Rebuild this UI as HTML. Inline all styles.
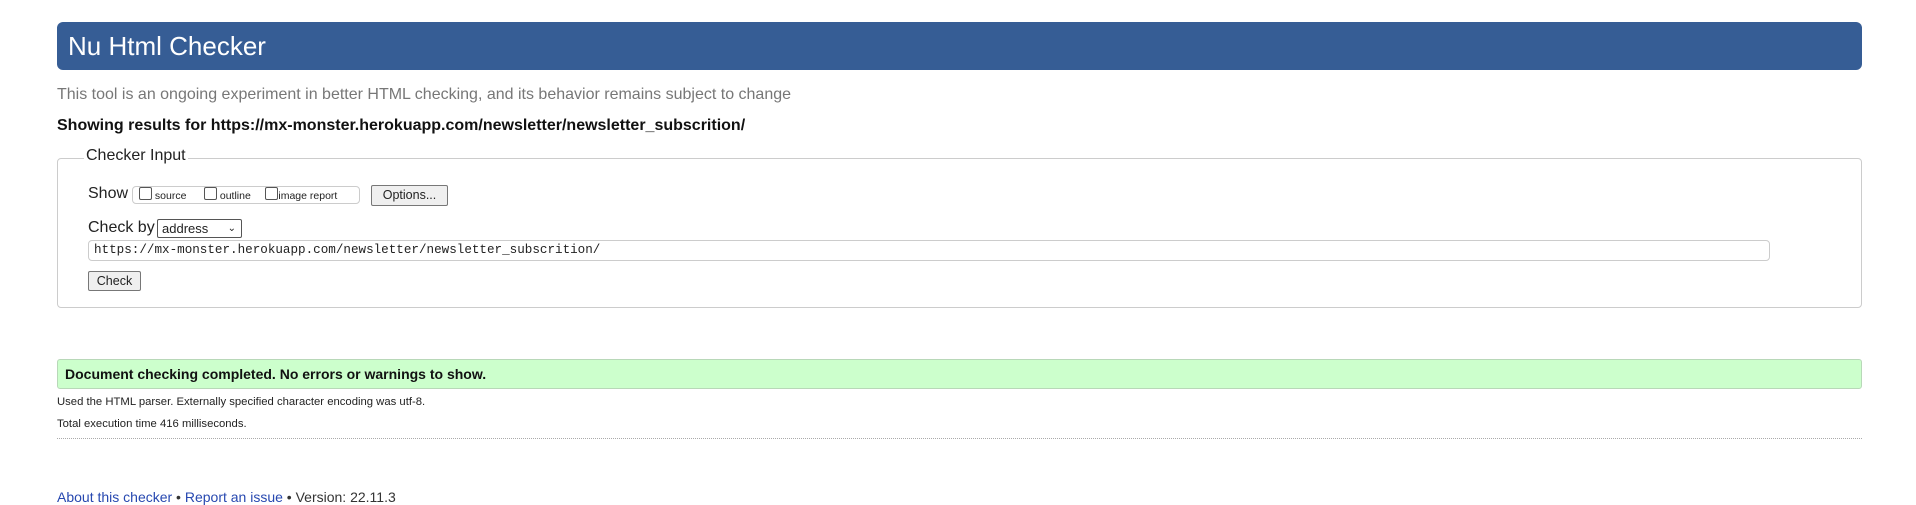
<!DOCTYPE html>
<html><head><meta charset="utf-8"><style>
body{margin:0;width:1916px;height:502px;background:#fff;font-family:"Liberation Sans",Arial,sans-serif;color:#222;position:relative;overflow:hidden}
.a{position:absolute;white-space:nowrap}
#hd{left:57px;top:22px;width:1805px;height:48px;background:#365d95;border-radius:6px;color:#fff;font-size:26px;line-height:48px;box-sizing:border-box;padding-left:11px}
#tag{left:57px;top:86px;font-size:16px;color:#777}
#sr{left:57px;top:117px;font-size:16px;font-weight:bold;color:#111}
#fs{left:57px;top:158px;width:1805px;height:150px;border:1px solid #ccc;border-radius:4px;box-sizing:border-box}
#lg{left:84px;top:147px;font-size:16px;background:#fff;padding:0 2px;color:#222}
.lbl{font-size:16px}
.cb{display:inline-block;width:11px;height:11px;border:1px solid #555;border-radius:2px;vertical-align:-1px;background:#fff}
.btn{border:1px solid #777;background:#efefef;border-radius:2px;font-size:12.5px;text-align:center;box-sizing:border-box}
#gr{left:57px;top:359px;width:1805px;height:30px;background:#ccffcc;border:1px solid #b8d8b8;border-radius:3px;box-sizing:border-box;font-weight:bold;font-size:14px;line-height:28px;padding-left:7px;color:#111}
.sm{font-size:11.3px;color:#222;left:57px}
#dl{left:57px;top:438px;width:1805px;border-top:1px dotted #aaa}
#ft{left:57px;top:489px;font-size:14px;color:#333}
#ft span{color:#2748b0}
</style></head><body>
<div id="hd" class="a">Nu Html Checker</div>
<div id="tag" class="a">This tool is an ongoing experiment in better HTML checking, and its behavior remains subject to change</div>
<div id="sr" class="a">Showing results for https://mx-monster.herokuapp.com/newsletter/newsletter_subscrition/</div>
<div id="fs" class="a"></div>
<div id="lg" class="a">Checker Input</div>
<div class="a lbl" style="left:88px;top:185px">Show</div>
<div class="a" style="left:132px;top:186px;width:228px;height:18px;border:1px solid #ccc;border-radius:4px;font-size:10.5px;line-height:18px;box-sizing:border-box;padding-left:6px">
<span class="cb"></span> source &nbsp;&nbsp;&nbsp;&nbsp;&nbsp;<span class="cb"></span> outline &nbsp;&nbsp;&nbsp;&nbsp;<span class="cb"></span>image report</div>
<div class="a btn" style="left:371px;top:185px;width:77px;height:21px;line-height:19px">Options...</div>
<div class="a lbl" style="left:88px;top:219px">Check by</div>
<div class="a" style="left:157px;top:219px;width:85px;height:19px;border:1px solid #555;border-radius:2px;font-size:13px;line-height:17px;box-sizing:border-box;padding-left:4px">address<span style="position:absolute;right:5px;top:0;font-size:10px">&#8964;</span></div>
<div class="a" style="left:88px;top:240px;width:1682px;height:21px;border:1px solid #ccc;border-radius:4px;box-sizing:border-box;font-family:'Liberation Mono',monospace;font-size:12.6px;line-height:19px;padding-left:5px">https://mx-monster.herokuapp.com/newsletter/newsletter_subscrition/</div>
<div class="a btn" style="left:88px;top:271px;width:53px;height:20px;line-height:18px">Check</div>
<div id="gr" class="a">Document checking completed. No errors or warnings to show.</div>
<div class="a sm" style="top:396px">Used the HTML parser. Externally specified character encoding was utf-8.</div>
<div class="a sm" style="top:418px">Total execution time 416 milliseconds.</div>
<div id="dl" class="a"></div>
<div id="ft" class="a"><span>About this checker</span> • <span>Report an issue</span> • Version: 22.11.3</div>
</body></html>
